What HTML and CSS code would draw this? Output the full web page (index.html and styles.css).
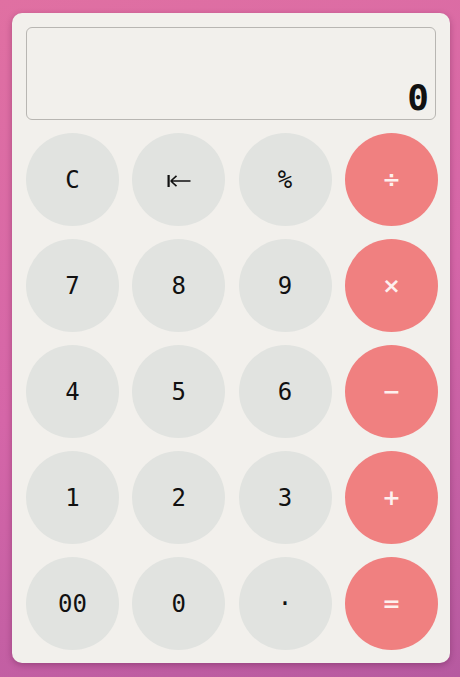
FILE: index.html
```html
<!DOCTYPE html>
<html>
<head>
<meta charset="utf-8">
<link rel="stylesheet" href="styles.css">
</head>
<body>
<div class="calc">
  <div class="display">0</div>
  <div class="keys">
    <button class="key">C</button>
    <button class="key arrow" aria-label="backspace"><svg width="24" height="14" viewBox="0 0 24 14"><rect x="0.5" y="1" width="2.2" height="12" fill="#111"/><path d="M3.5 7 H23.5 M3.8 7 L9.5 1.8 M3.8 7 L9.5 12.2" stroke="#111" stroke-width="1.6" fill="none"/></svg></button>
    <button class="key">%</button>
    <button class="key op">÷</button>
    <button class="key">7</button>
    <button class="key">8</button>
    <button class="key">9</button>
    <button class="key op">×</button>
    <button class="key">4</button>
    <button class="key">5</button>
    <button class="key">6</button>
    <button class="key op">−</button>
    <button class="key">1</button>
    <button class="key">2</button>
    <button class="key">3</button>
    <button class="key op">+</button>
    <button class="key">00</button>
    <button class="key">0</button>
    <button class="key">·</button>
    <button class="key op">=</button>
  </div>
</div>
</body>
</html>
```
FILE: styles.css
```css
html, body {
  margin: 0;
  height: 100%;
}
body {
  background: linear-gradient(160deg, #e070a2 0%, #d566a8 50%, #b65aa0 100%);
  font-family: "DejaVu Sans Mono", monospace;
  padding: 13px 10px 0 12px;
  box-sizing: border-box;
}
.calc {
  width: 438px;
  height: 650px;
  box-sizing: border-box;
  background: #f2f0ec;
  border-radius: 10px;
  padding: 14px;
  box-shadow: 0 2px 6px rgba(80, 20, 60, 0.35);
  display: flex;
  flex-direction: column;
  gap: 13px;
}
.display {
  height: 93px;
  flex: none;
  box-sizing: border-box;
  border: 1px solid #b8b6b2;
  border-radius: 6px;
  display: flex;
  align-items: flex-end;
  justify-content: flex-end;
  padding: 0 6px 1px 0;
  font-size: 36px;
  font-weight: bold;
  color: #111;
}
.keys {
  display: grid;
  grid-template-columns: repeat(4, 93px);
  grid-auto-rows: 93px;
  column-gap: 13.3px;
  row-gap: 13px;
}
.key {
  border: none;
  border-radius: 50%;
  background: #e1e3e0;
  font-family: "DejaVu Sans Mono", monospace;
  font-size: 24px;
  color: #111;
  padding: 0;
  display: flex;
  align-items: center;
  justify-content: center;
}
.key.arrow svg {
  display: block;
  margin-top: 2px;
}
.key.op {
  background: #f08080;
  color: #fdf0ee;
  font-weight: bold;
  font-family: "DejaVu Sans", sans-serif;
  font-size: 22px;
}
```
